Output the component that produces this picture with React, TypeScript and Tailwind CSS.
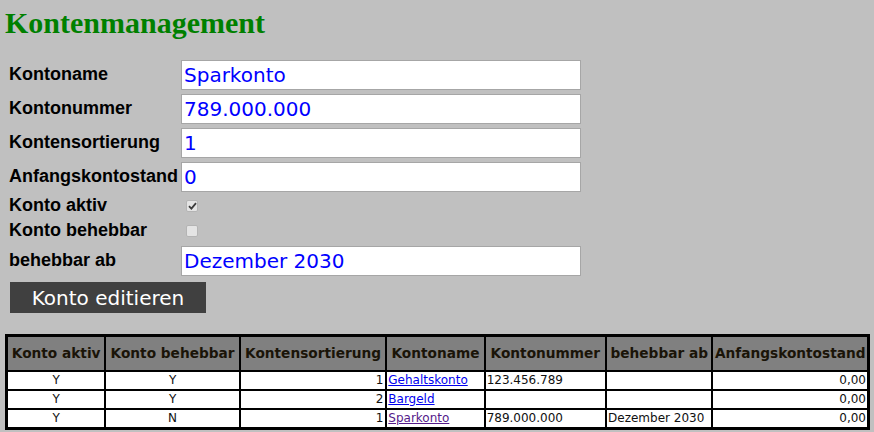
import React from "react"

const fields = [
  { label: "Kontoname", value: "Sparkonto" },
  { label: "Kontonummer", value: "789.000.000" },
  { label: "Kontensortierung", value: "1" },
  { label: "Anfangskontostand", value: "0" },
]

const accounts = [
  { aktiv: "Y", behebbar: "Y", sort: "1", name: "Gehaltskonto", nummer: "123.456.789", ab: "", stand: "0,00", visited: false },
  { aktiv: "Y", behebbar: "Y", sort: "2", name: "Bargeld", nummer: "", ab: "", stand: "0,00", visited: false },
  { aktiv: "Y", behebbar: "N", sort: "1", name: "Sparkonto", nummer: "789.000.000", ab: "Dezember 2030", stand: "0,00", visited: true },
]

function Label({ children, short }: { children: React.ReactNode; short?: boolean }) {
  return (
    <div
      className={`flex items-center pb-[3px] pl-[1px] text-[18px] font-bold leading-[20px] text-black [font-family:'Liberation_Sans',Arial,sans-serif] ${short ? "h-[21px]" : "h-[30px]"}`}
    >
      {children}
    </div>
  )
}

function TextInput({ value }: { value: string }) {
  return (
    <input
      readOnly
      value={value}
      className="h-[30px] w-[400px] border border-[#a6a6a6] bg-white px-[2px] text-[20px] text-[#0000ff] outline-none [font-family:'DejaVu_Sans',Verdana,sans-serif]"
    />
  )
}

function Checkbox({ checked }: { checked: boolean }) {
  return (
    <div className="flex h-[21px] items-center pb-[2px] pl-[5px]">
      <span className="flex h-[12px] w-[12px] items-center justify-center rounded-[2px] border border-[#b4b4b4] bg-[#e4e4e4]">
        {checked && (
          <svg width="9" height="8" viewBox="0 0 9 8">
            <path d="M1 4.2 L3.4 6.6 L8 1.2" fill="none" stroke="#3c3c3c" strokeWidth="1.8" />
          </svg>
        )}
      </span>
    </div>
  )
}

export default function App() {
  return (
    <div className="h-[432px] w-full bg-[#c0c0c0] px-[5px] pt-[6px]">
      <h1 className="text-[30px] font-bold leading-[34px] text-[#008000] [font-family:'Liberation_Serif','Times_New_Roman',serif]">
        Kontenmanagement
      </h1>

      <div className="mt-[20px] ml-[3px] grid grid-cols-[173px_400px] gap-y-[4px]">
        {fields.map((f) => (
          <React.Fragment key={f.label}>
            <Label>{f.label}</Label>
            <TextInput value={f.value} />
          </React.Fragment>
        ))}
        <Label short>Konto aktiv</Label>
        <Checkbox checked />
        <Label short>Konto behebbar</Label>
        <Checkbox checked={false} />
        <Label>behebbar ab</Label>
        <TextInput value="Dezember 2030" />
      </div>

      <button className="mt-[6px] ml-[5px] flex h-[31px] w-[196px] items-center justify-center bg-[#404040] text-[20px] text-white [font-family:'DejaVu_Sans',Verdana,sans-serif]">
        Konto editieren
      </button>

      <table className="mt-[21px] w-[865px] table-fixed border-separate border-spacing-0 border-[3px] border-black bg-white text-[12px] text-[#111] [font-family:'DejaVu_Sans',Verdana,sans-serif]">
        <thead>
          <tr className="bg-[#808080] text-[13.7px] font-bold text-[#1a1408]">
            <th className="w-[98px] border-r-2 border-b-2 border-black py-[8px] leading-[17px]">Konto aktiv</th>
            <th className="w-[134px] border-r-2 border-b-2 border-black py-[8px] leading-[17px]">Konto behebbar</th>
            <th className="w-[146px] border-r-2 border-b-2 border-black py-[8px] leading-[17px]">Kontensortierung</th>
            <th className="w-[98px] border-r-2 border-b-2 border-black py-[8px] leading-[17px]">Kontoname</th>
            <th className="w-[121px] border-r-2 border-b-2 border-black py-[8px] leading-[17px]">Kontonummer</th>
            <th className="w-[106px] border-r-2 border-b-2 border-black py-[8px] leading-[17px]">behebbar ab</th>
            <th className="w-[153px] border-b-2 border-black py-[8px] leading-[17px]">Anfangskontostand</th>
          </tr>
        </thead>
        <tbody>
          {accounts.map((a, i) => {
            const b = i < accounts.length - 1 ? "border-b-2" : ""
            return (
              <tr key={i} className="leading-[17px]">
                <td className={`border-r-2 ${b} border-black px-[1px] text-center`}>{a.aktiv}</td>
                <td className={`border-r-2 ${b} border-black px-[1px] text-center`}>{a.behebbar}</td>
                <td className={`border-r-2 ${b} border-black px-[2px] text-right`}>{a.sort}</td>
                <td className={`border-r-2 ${b} border-black px-[1px]`}>
                  <a href="#" className={a.visited ? "text-[#551a8b] underline" : "text-[#0000ee] underline"}>
                    {a.name}
                  </a>
                </td>
                <td className={`border-r-2 ${b} border-black px-[1px]`}>{a.nummer}</td>
                <td className={`border-r-2 ${b} border-black px-[1px]`}>{a.ab}</td>
                <td className={`${b} border-black px-[1px] text-right`}>{a.stand}</td>
              </tr>
            )
          })}
        </tbody>
      </table>
    </div>
  )
}
